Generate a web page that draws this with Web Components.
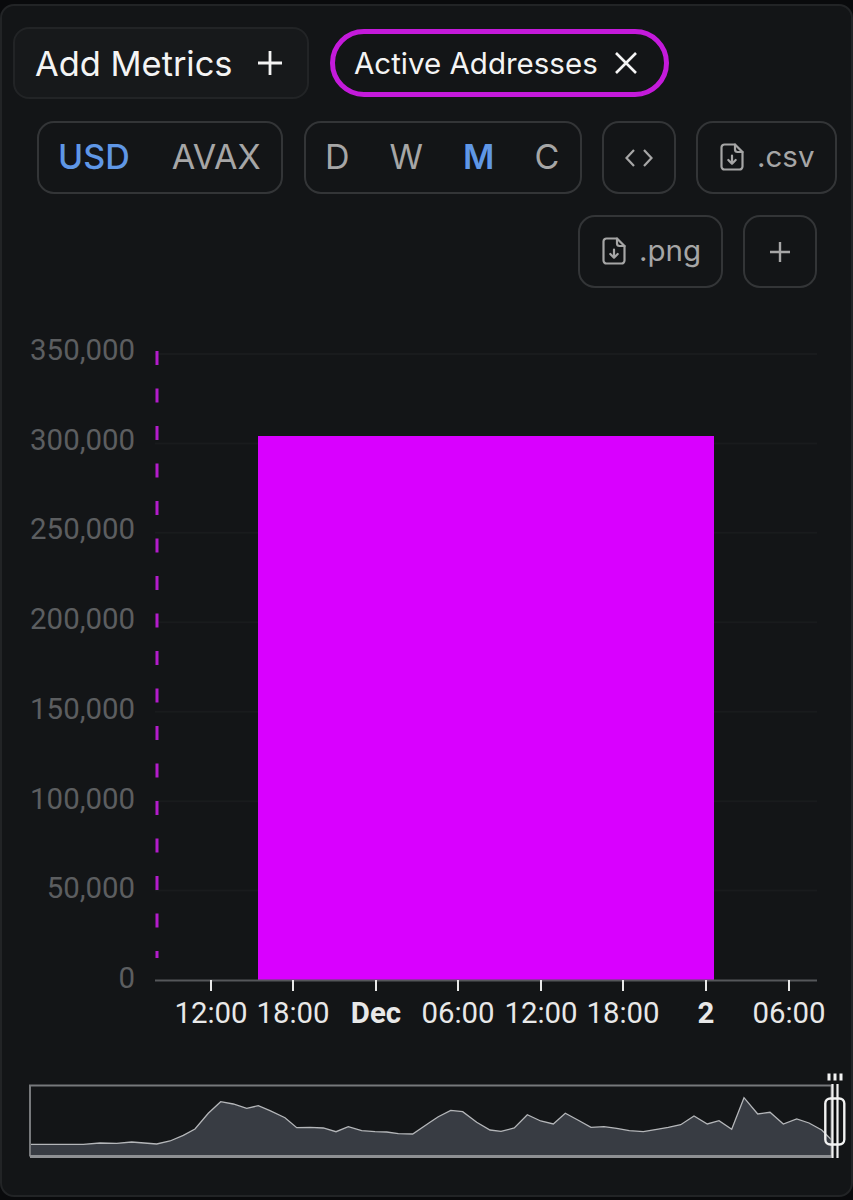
<!DOCTYPE html>
<html>
<head>
<meta charset="utf-8">
<title>Active Addresses</title>
<style>
  html, body { margin: 0; padding: 0; background: #090a0c; }
  body { width: 853px; height: 1200px; overflow: hidden; font-family: "Inter", "Liberation Sans", sans-serif; }
</style>
</head>
<body>
<chart-panel>
  <metric-row slot="metrics">
    <add-metrics>Add Metrics</add-metrics>
    <metric-chip>Active Addresses</metric-chip>
  </metric-row>
  <tool-row slot="tools">
    <tool-group width="246" gap="42"><tool-item active>USD</tool-item><tool-item>AVAX</tool-item></tool-group>
    <tool-group width="278" gap="40"><tool-item>D</tool-item><tool-item>W</tool-item><tool-item active strong>M</tool-item><tool-item>C</tool-item></tool-group>
    <tool-button icon="code"></tool-button>
    <tool-button icon="file" width="141">.csv</tool-button>
  </tool-row>
  <tool-row slot="tools" end>
    <tool-button icon="file" width="145">.png</tool-button>
    <tool-button icon="plus"></tool-button>
  </tool-row>
  <bar-chart slot="chart"></bar-chart>
  <range-navigator slot="nav"></range-navigator>
</chart-panel>

<script>
// outer box of the whole widget, slots hold the rows
class ChartPanel extends HTMLElement {
  connectedCallback() {
    const shadow = this.attachShadow({ mode: "open" });
    shadow.innerHTML = `<style>
      :host { display: block; margin-top: 4px; height: 1193px; box-sizing: border-box;
        background: #131517; border: 2px solid #222426; border-radius: 14px; overflow: hidden; }
      .metrics { padding: 21px 0 0 11px; }
      .tools { display: flex; flex-direction: column; gap: 21px; padding-top: 22px; }
      .chart { padding-top: 12px; }
    </style>
    <div class="metrics"><slot name="metrics"></slot></div>
    <div class="tools"><slot name="tools"></slot></div>
    <div class="chart"><slot name="chart"></slot></div>
    <div class="nav"><slot name="nav"></slot></div>`;
  }
}

class MetricRow extends HTMLElement {
  connectedCallback() {
    const shadow = this.attachShadow({ mode: "open" });
    shadow.innerHTML = `<style>
      :host { display: flex; align-items: center; gap: 21px; height: 72px; }
    </style><slot></slot>`;
  }
}

class AddMetrics extends HTMLElement {
  connectedCallback() {
    const shadow = this.attachShadow({ mode: "open" });
    shadow.innerHTML = `<style>
      :host { display: inline-flex; align-items: center; box-sizing: border-box; width: 296px; height: 72px;
        padding-left: 20px; gap: 25px; background: #17191b; border: 2px solid #222426;
        border-radius: 16px; color: #f4f4f4; font: 400 34.4px "Inter", "Liberation Sans", sans-serif; white-space: nowrap; }
      svg { width: 24px; height: 24px; flex: none; }
    </style>
    <slot></slot>
    <svg viewBox="0 0 24 24" fill="none" stroke="#f4f4f4" stroke-width="2.8"><path d="M12 0V24M0 12H24"/></svg>`;
  }
}

class MetricChip extends HTMLElement {
  connectedCallback() {
    const shadow = this.attachShadow({ mode: "open" });
    shadow.innerHTML = `<style>
      :host { display: inline-flex; align-items: center; box-sizing: border-box; width: 339px; height: 68px;
        padding-left: 19px; gap: 17px; border: 5px solid #c41adb;
        border-radius: 34px; color: #f4f4f4; font: 400 29.5px "Inter", "Liberation Sans", sans-serif; white-space: nowrap; }
      svg { width: 22px; height: 22px; flex: none; }
    </style>
    <slot></slot>
    <svg viewBox="0 0 22 22" fill="none" stroke="#f4f4f4" stroke-width="2.6"><path d="M1 1L21 21M21 1L1 21"/></svg>`;
  }
}

class ToolRow extends HTMLElement {
  connectedCallback() {
    const shadow = this.attachShadow({ mode: "open" });
    const end = this.hasAttribute("end");
    shadow.innerHTML = `<style>
      :host { display: flex; gap: 20px; justify-content: ${end ? "flex-end" : "flex-start"};
        padding-left: ${end ? 0 : 35}px; padding-right: ${end ? 34 : 0}px; }
      ::slotted(tool-group:first-child) { margin-right: 1px; }
    </style><slot></slot>`;
  }
}

class ToolGroup extends HTMLElement {
  connectedCallback() {
    const shadow = this.attachShadow({ mode: "open" });
    shadow.innerHTML = `<style>
      :host { display: inline-flex; align-items: center; box-sizing: border-box; height: 73px; padding: 0 0 3px 19px;
        width: ${this.getAttribute("width")}px; gap: ${this.getAttribute("gap")}px;
        border: 2px solid #333537; border-radius: 17px; }
    </style><slot></slot>`;
  }
}

class ToolItem extends HTMLElement {
  connectedCallback() {
    const shadow = this.attachShadow({ mode: "open" });
    const active = this.hasAttribute("active");
    const weight = this.hasAttribute("strong") ? 600 : active ? 500 : 400;
    shadow.innerHTML = `<style>
      :host { display: inline-block; color: ${active ? "#5f97e6" : "#a6a6a6"};
        font: ${weight} 34px "Inter", "Liberation Sans", sans-serif; }
    </style><slot></slot>`;
  }
}

const toolIcons = {
  code: `<svg width="28" height="18" viewBox="0 0 28 18" fill="none" stroke="#a6a6a6" stroke-width="2.2"><path d="M9 1L1.5 9L9 17M19 1L26.5 9L19 17"/></svg>`,
  plus: `<svg width="20" height="20" viewBox="0 0 20 20" fill="none" stroke="#a6a6a6" stroke-width="2.4"><path d="M10 0V20M0 10H20"/></svg>`,
  file: `<svg class="file" width="24" height="28" viewBox="0 0 24 28" fill="none" stroke="#a6a6a6" stroke-width="2.2" stroke-linejoin="round" stroke-linecap="round"><path d="M15 1.5H4.5A3 3 0 0 0 1.5 4.5V23.500A3 3 0 0 0 4.500 26.500H19.500A3 3 0 0 0 22.500 23.500V9Z"/><path d="M15 1.500V6.500A2.500 2.500 0 0 0 17.500 9H22.500"/><path d="M12 12.500V20.500M8.300 17L12 20.700L15.700 17"/></svg>`
};

class ToolButton extends HTMLElement {
  connectedCallback() {
    const shadow = this.attachShadow({ mode: "open" });
    const width = this.getAttribute("width");
    shadow.innerHTML = `<style>
      :host { display: inline-flex; align-items: center; justify-content: ${width ? "flex-start" : "center"}; box-sizing: border-box; height: 73px;
        width: ${width || 74}px; padding-left: ${width ? 22 : 0}px; gap: 13px; border: 2px solid #333537; border-radius: 17px;
        color: #a6a6a6; font: 400 29.5px "Inter", "Liberation Sans", sans-serif; }
      svg { display: block; flex: none; }
      svg.file { margin-bottom: 2px; }
      span { margin-bottom: 3px; }
    </style>${toolIcons[this.getAttribute("icon")]}${width ? "<span><slot></slot></span>" : ""}`;
  }
}

// main chart, viewBox uses page coordinates so the numbers stay readable
class BarChart extends HTMLElement {
  connectedCallback() {
    const shadow = this.attachShadow({ mode: "open" });
    const yLabels = ["350,000", "300,000", "250,000", "200,000", "150,000", "100,000", "50,000", "0"];
    const ticks = [[211, "12:00"], [293, "18:00"], [376, "Dec", 1], [458, "06:00"], [541, "12:00"], [623, "18:00"], [706, "2", 1], [789, "06:00"]];
    let grid = "", labels = "", xAxis = "";
    yLabels.forEach((label, i) => {
      const y = 354 + i * 89.43;
      if (i < 7) grid += `<line x1="155" x2="817" y1="${y}" y2="${y}" stroke="#191b1d" stroke-width="2"/>`;
      labels += `<text class="y" x="135" y="${360 + i * 89.7}">${label}</text>`;
    });
    ticks.forEach(([x, label, bold]) => {
      xAxis += `<line x1="${x}" x2="${x}" y1="980" y2="991" stroke="#e8e8e8" stroke-width="2"/>`;
      xAxis += `<text class="x${bold ? " bold" : ""}" x="${x}" y="1023">${label}</text>`;
    });
    shadow.innerHTML = `<style>
      :host { display: block; }
      svg { display: block; width: 849px; height: 760px; }
      text { font-family: "Roboto", "Liberation Sans", sans-serif; font-size: 29.4px; }
      .y { fill: #5c5e60; text-anchor: end; }
      .x { fill: #e8e8e8; text-anchor: middle; }
      .bold { font-weight: 700; }
    </style>
    <svg viewBox="2 300 849 760">
      ${grid}
      ${labels}
      <line x1="157" x2="157" y1="351" y2="958" stroke="#b31ccb" stroke-width="3" stroke-dasharray="14 23.500"/>
      <rect x="258" y="436" width="456" height="544" fill="#d900ff"/>
      <line x1="155" x2="817" y1="980.500" y2="980.500" stroke="#55575a" stroke-width="2"/>
      ${xAxis}
    </svg>`;
  }
}

// overview strip, points read off the picture in 3x units
const overview = [[90,253],[250,253],[300,249],[350,250],[395,246],[470,252],[510,243],[550,226],[585,207],[625,160],[662,125],[700,132],[740,145],[775,137],[810,152],[855,173],[890,203],[930,202],[970,204],[1008,215],[1045,200],[1085,212],[1125,215],[1160,216],[1195,221],[1238,222],[1290,187],[1315,170],[1352,151],[1388,155],[1430,187],[1470,210],[1503,214],[1543,204],[1582,164],[1622,183],[1660,192],[1696,160],[1735,181],[1773,202],[1812,200],[1850,205],[1888,212],[1930,215],[1970,208],[2005,202],[2042,194],[2082,168],[2122,192],[2157,182],[2195,208],[2232,113],[2273,162],[2310,157],[2350,192],[2390,177],[2427,189],[2465,210],[2495,240]];

class RangeNavigator extends HTMLElement {
  connectedCallback() {
    const shadow = this.attachShadow({ mode: "open" });
    const line = overview.map(([x, y]) => `${(x / 3).toFixed(1)},${(y / 3).toFixed(1)}`).join(" ");
    shadow.innerHTML = `<style>
      :host { display: block; }
      svg { display: block; width: 849px; height: 120px; }
    </style>
    <svg viewBox="2 0 849 120" fill="none">
      <polygon points="${line} 831.700,96 30,96" fill="#383c43"/>
      <polyline points="${line}" stroke="#b4b6b9" stroke-width="1.300"/>
      <path d="M30 96.500V25.500H831.500V96.500" stroke="#77797c" stroke-width="2"/>
      <path d="M30 96.500H831.500" stroke="#8e9093" stroke-width="3"/>
      <rect x="833" y="38" width="5" height="47" fill="#090a0c"/>
      <path d="M832.500 24V98M837.500 24V98" stroke="#f2f2f2" stroke-width="2.200"/>
      <rect x="825.300" y="38.500" width="19" height="46" rx="5" stroke="#f2f2f2" stroke-width="2.400"/>
      <path d="M829 13.500V20.500M835 13.500V20.500M841 13.500V20.500" stroke="#f2f2f2" stroke-width="3"/>
    </svg>`;
  }
}

customElements.define("chart-panel", ChartPanel);
customElements.define("metric-row", MetricRow);
customElements.define("add-metrics", AddMetrics);
customElements.define("metric-chip", MetricChip);
customElements.define("tool-row", ToolRow);
customElements.define("tool-group", ToolGroup);
customElements.define("tool-item", ToolItem);
customElements.define("tool-button", ToolButton);
customElements.define("bar-chart", BarChart);
customElements.define("range-navigator", RangeNavigator);
</script>
</body>
</html>
